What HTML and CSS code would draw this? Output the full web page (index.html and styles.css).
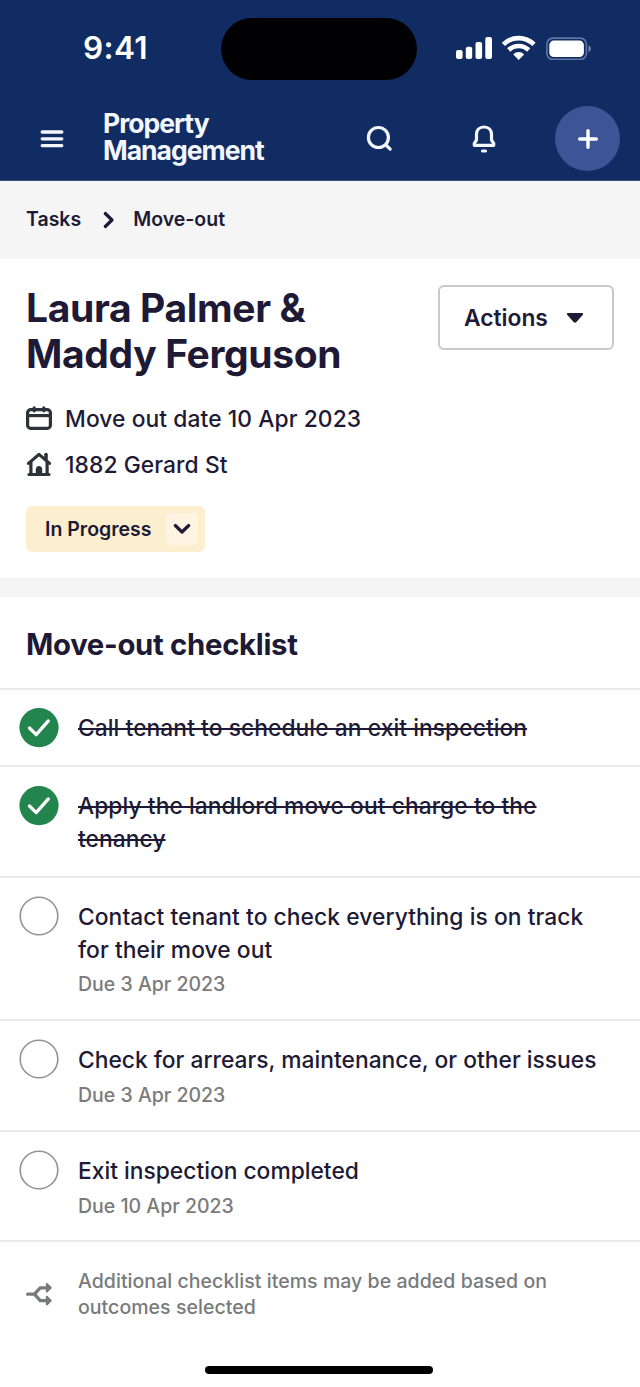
FILE: index.html
```html
<!DOCTYPE html>
<html lang="en">
<head>
<meta charset="utf-8">
<title>Property Management</title>
<link rel="stylesheet" href="styles.css">
</head>
<body>
<header class="top">
  <div class="status">
    <span class="time">9:41</span>
    <span class="island"></span>
    <svg class="signals" width="138" height="28" viewBox="0 0 138 28">
      <g fill="#fff">
        <rect x="2" y="18" width="6.6" height="9" rx="2"/>
        <rect x="11.8" y="14.8" width="6.4" height="12.2" rx="2"/>
        <rect x="21.5" y="10" width="6.6" height="17" rx="2"/>
        <rect x="31.3" y="5" width="6.7" height="22" rx="2"/>
        <path d="M64.7 28 L59.3 22.5 C62 19.200 67.400 19.200 70.100 22.500Z"/>
      </g>
      <g fill="none" stroke="#fff" stroke-width="4.600">
        <path d="M49.400 12.400C58 4 71.400 4 80 12.400"/>
        <path d="M54.700 18C60.300 12.600 69.100 12.600 74.700 18"/>
      </g>
      <rect x="92.900" y="6.100" width="39.500" height="21.300" rx="6" fill="none" stroke="#5f76a3" stroke-width="1.600"/>
      <rect x="95.300" y="8.600" width="34.600" height="16.400" rx="4.500" fill="#fff"/>
      <path d="M134.500 13.500c3.200 1.200 3.200 5.300 0 6.500z" fill="#7185ad"/>
    </svg>
  </div>
  <div class="nav">
    <svg class="menu" width="24" height="18" viewBox="0 0 24 18" stroke="#f4f6ff" stroke-width="3.300" stroke-linecap="round"><path d="M2.200 2h19.600M2.200 8.800h19.600M2.200 15.600h19.600"/></svg>
    <div class="brand">Property<br>Management</div>
    <svg class="search" width="28" height="28" viewBox="0 0 28 28" fill="none" stroke="#f4f6ff" stroke-width="3.200" stroke-linecap="round"><circle cx="12.400" cy="12.500" r="10"/><path d="M19.900 20l4.300 4.100"/></svg>
    <svg class="bell" width="28" height="30" viewBox="0 0 28 30" fill="none" stroke="#f4f6ff" stroke-width="3.200" stroke-linejoin="round"><path d="M14 3C9.200 3 6.500 6.200 6.500 10.200V16L4.300 19.300V21.300H23.700V19.300L21.500 16V10.200C21.500 6.200 18.800 3 14 3Z"/><path d="M12.500 27h3" stroke-linecap="round"/></svg>
    <span class="add"><svg width="22" height="22" viewBox="0 0 22 22" stroke="#fff" stroke-width="3.400" stroke-linecap="round"><path d="M11 2.700v16.600M2.700 11h16.600"/></svg></span>
  </div>
</header>
<nav class="crumbs">
  <span class="tasks">Tasks</span>
  <svg width="12" height="18" viewBox="0 0 12 18" fill="none" stroke="#1e1a35" stroke-width="3.200" stroke-linecap="round" stroke-linejoin="round"><path d="M2.300 2.500L9 9l-6.700 6.500"/></svg>
  <span class="current">Move-out</span>
</nav>
<section class="summary">
  <div class="heading">
    <h1>Laura Palmer &amp;<br>Maddy Ferguson</h1>
    <button class="actions"><span>Actions</span><svg width="18" height="12" viewBox="0 0 18 12" fill="#1e1a35"><path d="M2.200 1H15.800Q18 1.200 16.700 3L10.400 10Q9 11.300 7.600 10L1.300 3Q0 1.200 2.200 1Z"/></svg></button>
  </div>
  <div class="fact">
    <svg width="26" height="26" viewBox="0 0 26 26" fill="none" stroke="#2b3338" stroke-width="3.200"><rect x="1.600" y="4.600" width="22.800" height="18.800" rx="3.200"/><path d="M2 10.600h22"/><path d="M8.200 2.800v3M17.800 2.800v3" stroke-linecap="round"/></svg>
    <span class="date">Move out date 10 Apr 2023</span>
  </div>
  <div class="fact">
    <svg class="house" width="26" height="26" viewBox="0 0 26 26" fill="none" stroke="#2b3338" stroke-width="3.200" stroke-linejoin="round" stroke-linecap="round"><path d="M2.500 12.400L13 3.400L23.500 12.400"/><path d="M4.900 11.500V23M21.100 11.500V23M3 23.500H23"/><path d="M20 3.600V8" stroke-width="3.600"/><path d="M9.800 23V18.500Q10 15 13 15T16.200 18.500V23Z" fill="#2b3338" stroke="none"/></svg>
    <span class="address">1882 Gerard St</span>
  </div>
  <div class="state"><span>In Progress</span><i><svg width="18" height="12" viewBox="0 0 18 12" fill="none" stroke="#1e1a35" stroke-width="3.200" stroke-linecap="round" stroke-linejoin="round"><path d="M2.300 2.500L9 9l6.700-6.500"/></svg></i></div>
</section>
<main class="checklist">
  <h2>Move-out checklist</h2>
  <ul>
    <li class="row first done"><svg class="tick" width="40" height="40" viewBox="0 0 40 40"><circle cx="20" cy="19.600" r="19.600" fill="#21854d"/><path d="M10.500 20l6.700 6.700L29.300 12.900" fill="none" stroke="#fff" stroke-width="3.300" stroke-linecap="round" stroke-linejoin="round"/></svg><div><p class="t1">Call tenant to schedule an exit inspection</p></div></li>
    <li class="row second done"><svg class="tick" width="40" height="40" viewBox="0 0 40 40"><circle cx="20" cy="19.600" r="19.600" fill="#21854d"/><path d="M10.500 20l6.700 6.700L29.300 12.900" fill="none" stroke="#fff" stroke-width="3.300" stroke-linecap="round" stroke-linejoin="round"/></svg><div><p class="t2">Apply the landlord move out charge to the<br>tenancy</p></div></li>
    <li class="row third"><svg class="ring" width="40" height="40" viewBox="0 0 40 40"><circle cx="20" cy="20" r="18.800"/></svg><div><p class="t3">Contact tenant to check everything is on track<br>for their move out</p><small>Due 3 Apr 2023</small></div></li>
    <li class="row fourth"><svg class="ring" width="40" height="40" viewBox="0 0 40 40"><circle cx="20" cy="20" r="18.800"/></svg><div><p class="t4">Check for arrears, maintenance, or other issues</p><small>Due 3 Apr 2023</small></div></li>
    <li class="row fifth"><svg class="ring" width="40" height="40" viewBox="0 0 40 40"><circle cx="20" cy="20" r="18.800"/></svg><div><p class="t5">Exit inspection completed</p><small>Due 10 Apr 2023</small></div></li>
  </ul>
  <div class="note">
    <svg width="28" height="26" viewBox="0 0 28 26" fill="none" stroke="#777b7c" stroke-width="3.300" stroke-linecap="round" stroke-linejoin="round"><path d="M2.600 13.200H9.500L15.200 6.800H23M9.500 13.200L15.200 19.600H23"/><path d="M21.800 3L25.800 6.800L21.800 10.600ZM21.800 15.800L25.800 19.600L21.800 23.400Z" fill="#777b7c" stroke-width="2"/></svg>
    <p>Additional checklist items may be added based on<br>outcomes selected</p>
  </div>
</main>
<footer class="home"><span></span></footer>
</body>
</html>
```

FILE: styles.css
```css
* { box-sizing: border-box; }
body { margin: 0; width: 640px; height: 1387px; overflow: hidden; display: flex; flex-direction: column; background: #fff; color: #1e1a35; font-family: Inter, "Liberation Sans", sans-serif; }
h1, h2, p, ul { margin: 0; padding: 0; }
svg { display: block; flex: none; }
span, small { white-space: nowrap; }

.top { height: 181px; flex: none; background: #102c62; border-bottom: 1px solid #3a5077; color: #fff; }
.status { height: 97px; display: flex; align-items: flex-start; }
.time { width: 138px; margin: 29px 0 0 83px; font-size: 31.5px; line-height: 38px; font-weight: 600; letter-spacing: 0.4px; }
.island { width: 196px; height: 62px; margin-top: 18px; border-radius: 31px; background: #010002; }
.signals { margin: 32px 0 0 37px; }
.nav { height: 83px; display: flex; align-items: center; }
.menu { margin-left: 40px; }
.brand { width: 238px; margin-left: 39px; padding-bottom: 4px; font-size: 26.5px; line-height: 27px; font-weight: 700; letter-spacing: -1px; color: #f4f6ff; }
.search { margin-left: 25px; }
.bell { margin-left: 76px; }
.add { width: 65px; height: 65px; margin-left: 57px; border-radius: 50%; background: #3b5597; display: grid; place-items: center; }

.crumbs { height: 78px; flex: none; display: flex; align-items: center; padding-left: 26px; background: #f5f5f5; font-size: 19.5px; font-weight: 600; }
.crumbs span { margin-top: -2px; }
.crumbs svg { margin: 0 18px 0 22px; }

.summary { height: 319px; flex: none; padding: 26px 26px 0; }
.heading { display: flex; justify-content: space-between; align-items: flex-start; height: 110px; }
h1 { font-size: 39px; line-height: 46px; font-weight: 700; letter-spacing: -0.35px; white-space: nowrap; }
.actions { width: 176px; height: 65px; padding: 0 28px 0 24px; display: flex; align-items: center; justify-content: space-between; border: 2px solid #c9c9c9; border-radius: 6px; background: #fff; color: inherit; font: 600 22.8px Inter, sans-serif; }
.fact { height: 46px; display: flex; align-items: center; gap: 13px; font-size: 22.8px; font-weight: 450; letter-spacing: 0.08px; }
.state { width: 179px; height: 46px; margin-top: 19px; padding: 0 7px 0 19px; display: flex; align-items: center; justify-content: space-between; border-radius: 6px; background: #fcefcf; font-size: 19.5px; font-weight: 600; }
.state i { width: 32px; height: 32px; display: grid; place-items: center; border-radius: 5px; background: #fff3e2; }

.checklist { border-top: 19px solid #f5f5f5; flex: 1; }
h2 { height: 91px; padding-left: 26px; font-size: 29.3px; line-height: 95px; font-weight: 700; letter-spacing: -0.3px; }
ul { list-style: none; }
.row { display: flex; gap: 19px; padding: 23px 0 0 19px; border-top: 2px solid #e9e9e9; font-size: 22.8px; line-height: 32.5px; font-weight: 450; white-space: nowrap; }
.row small { display: block; margin-top: 5px; font-size: 19.5px; line-height: 26px; color: #7b7b7b; }
.t1, .t2, .t3 { letter-spacing: 0.06px; }
.first { height: 77px; padding-top: 22px; }
.second { height: 111px; }
.third { height: 143px; }
.fourth { height: 111px; }
.fifth { height: 110px; }
.tick { margin-top: -4px; }
.done p { text-decoration: line-through; text-decoration-thickness: 2px; }
.ring { margin-top: -5px; fill: none; stroke: #939393; stroke-width: 1.6px; }
.note { display: flex; align-items: center; gap: 25px; padding: 26px 0 0 25px; border-top: 2px solid #e9e9e9; font-size: 19.5px; line-height: 26px; font-weight: 450; color: #777b7c; white-space: nowrap; letter-spacing: 0.05px; }

.home { height: 21px; flex: none; }
.home span { display: block; width: 228px; height: 8px; margin-left: 205px; border-radius: 4px; background: #000; }
```
